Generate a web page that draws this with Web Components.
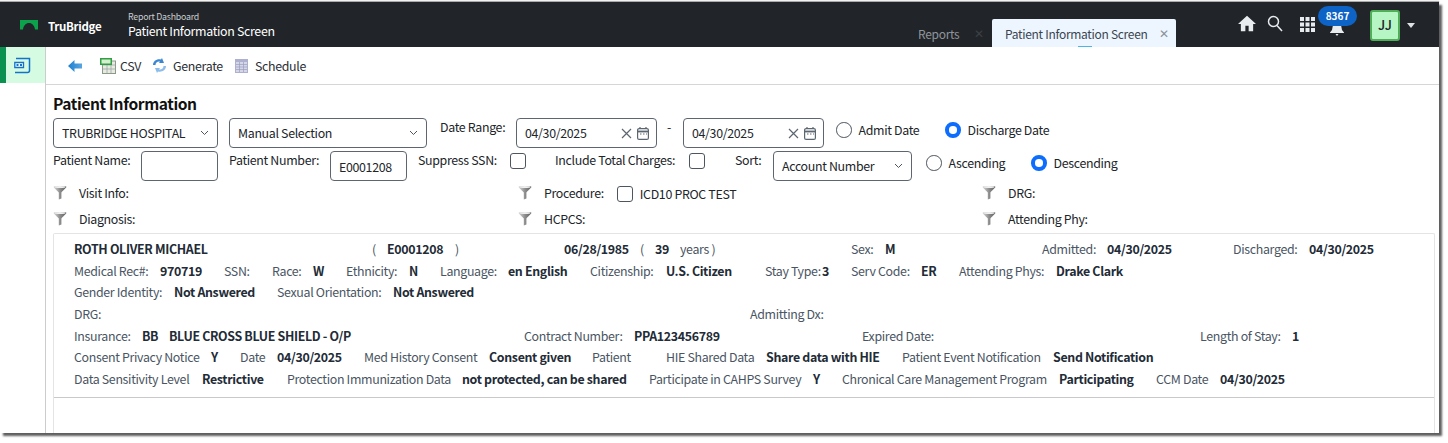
<!DOCTYPE html>
<html lang="en">
<head>
<meta charset="utf-8">
<title>Patient Information Screen</title>
<style>
  html, body { margin: 0; background: #fff; overflow: hidden; height: 443px; }
  body { font-family: "Noto Sans CJK JP", "Noto Sans", sans-serif; font-size: 12.4px; letter-spacing: -.33px; color: #212529; }
</style>
</head>
<body>
<app-window>
  <app-header slot="header"></app-header>
  <side-nav slot="side"></side-nav>
  <tool-bar slot="tools"></tool-bar>
  <patient-form slot="form"></patient-form>
  <patient-card slot="card"></patient-card>
</app-window>

<script>
const funnelSvg = `<svg width="14" height="15" viewBox="0 0 14 15"><defs><linearGradient id="fg" x1="0" x2="1"><stop offset="0" stop-color="#d8d8d8"/><stop offset=".5" stop-color="#8e8e8e"/><stop offset="1" stop-color="#5e5e5e"/></linearGradient></defs><path d="M.5 1.800C.5.600 13.500.600 13.500 1.800 13.500 2.600 9 6.500 8.400 7.600V13.600L5.800 14.600V7.600C5 6.500.5 2.600.5 1.800Z" fill="url(#fg)"/><ellipse cx="7" cy="1.900" rx="5.400" ry="1" fill="#efefef"/></svg>`;

function define(name, css, render) {
  customElements.define(name, class extends HTMLElement {
    connectedCallback() {
      const root = this.attachShadow({ mode: "open" });
      root.innerHTML = `<style>${css}</style>${render(this)}`;
    }
  });
}

define("app-window", `
  :host { display: block; width: 1439px; height: 431px; margin-top: 2px; background: #fff;
    box-shadow: 3px 3px 2px #5f5f5f, 0 -1px 1px #aaa; overflow: hidden; }
  .shell { display: grid; grid-template-columns: 46px 1fr; grid-template-rows: 45px 1fr; height: 100%; }
  .head { grid-column: 1 / -1; }
  .main { display: flex; flex-direction: column; min-width: 0; min-height: 0; }
`, () => `
  <div class="shell">
    <div class="head"><slot name="header"></slot></div>
    <slot name="side"></slot>
    <div class="main">
      <slot name="tools"></slot>
      <slot name="form"></slot>
      <slot name="card"></slot>
    </div>
  </div>`);

define("app-header", `
  :host { display: flex; align-items: stretch; height: 45px; background: #212529; color: #fff; position: relative; }
  .logo { margin: 18px 0 0 20px; width: 18px; height: 10px; }
  .brand { margin: 15px 0 0 10px; width: 80px; font-weight: 700; font-size: 11.5px; line-height: 18px; letter-spacing: -.3px; }
  .titles { width: 200px; padding-top: 9px; }
  .titles small { display: block; font-size: 8.800px; letter-spacing: -.23px; line-height: 12px; color: #c9ccd0; }
  .titles b { display: block; font-weight: 400; font-size: 12.4px; line-height: 17px; }
  .tabs { display: flex; margin-left: 590px; align-self: flex-end; height: 28px; white-space: nowrap; }
  .tab { display: flex; align-items: center; font-size: 12px; letter-spacing: -.3px; }
  .tab.off { width: 74px; color: #8f959b; }
  .tab.off i { margin-left: 15px; color: #3b4046; }
  .tab.on { width: 184px; box-sizing: border-box; padding-left: 13px; background: #edf6fe; color: #3a4450;
    border-radius: 2px 2px 0 0; position: relative; height: 28px; }
  .tab.on i { margin-left: 11px; color: #8b929a; }
  .tab.on::after { content: ""; position: absolute; left: 86px; bottom: 0; width: 14px; height: 1px; background: #4db5e6; }
  .tab i { font-style: normal; font-size: 12px; line-height: 1; }
  .tools { display: flex; align-items: flex-start; margin-left: 62px; position: relative; }
  .tools svg { display: block; fill: #e9ecef; }
  .ic { margin-top: 14px; }
  .bell { position: relative; margin: 0 0 0 15px; width: 14px; height: 45px; }
  .bell svg { position: absolute; top: 23px; left: 0; }
  .badge { position: absolute; top: 4px; left: -12px; width: 39px; height: 20px; border-radius: 10px; background: #0e63c6;
    color: #fff; font: 700 10px/19px "Noto Sans CJK JP", sans-serif; text-align: center; letter-spacing: 0; }
  .avatar { box-sizing: border-box; margin: 8px 0 0 26px; width: 30px; height: 31px; border: 2px solid #4fae57; border-radius: 3px;
    background: #b6f5c4; color: #212529; font-weight: 500; font-size: 13px; line-height: 25px; text-align: center; letter-spacing: .2px; }
  .caret { margin: 21px 0 0 7px; width: 0; height: 0; border: 4.500px solid transparent; border-top: 5px solid #dfe2e5; border-bottom: 0; }
`, () => `
  <svg class="logo" viewBox="0 0 18 10"><path d="M0 0H18V9.500H15C14.500 5.500 12 3 9 3S3.500 5.500 3 9.500H0Z" fill="#0ca24c"/></svg>
  <div class="brand">TruBridge</div>
  <div class="titles"><small>Report Dashboard</small><b>Patient Information Screen</b></div>
  <div class="tabs">
    <div class="tab off">Reports<i>&#x2715;</i></div>
    <div class="tab on">Patient Information Screen<i>&#x2715;</i></div>
  </div>
  <div class="tools">
    <svg class="ic" style="margin-top:13px" width="18" height="18" viewBox="1 2 22 20"><path d="M10 21v-7h4v7h5.500v-9H23L12 2 1 12h3.500v9z"/></svg>
    <svg class="ic" style="margin:13px 0 0 11px;fill:none;stroke:#e9ecef;stroke-width:1.500" width="16" height="17" viewBox="0 0 16 17"><circle cx="6.500" cy="6.500" r="5"/><path d="M10 10.500l5 5.500"/></svg>
    <svg class="ic" style="margin:15px 0 0 17px" width="15" height="15" viewBox="0 0 15 15"><path d="M0 0h4v4H0zM5.500 0h4v4h-4zM11 0h4v4h-4zM0 5.500h4v4H0zM5.500 5.500h4v4h-4zM11 5.500h4v4h-4zM0 11h4v4H0zM5.500 11h4v4h-4zM11 11h4v4h-4z"/></svg>
    <div class="bell">
      <svg width="14" height="11" viewBox="0 0 14 11"><path d="M3 0h8l1 5 2 2.500V8H0v-.5L2 5zM5.500 9h3L7 11z"/></svg>
      <span class="badge">8367</span>
    </div>
    <div class="avatar">JJ</div>
    <div class="caret"></div>
  </div>`);

define("side-nav", `
  :host { display: block; box-sizing: border-box; border-right: 1px solid #ccc; background: #fff; }
  .item { display: flex; align-items: center; height: 36px; background: #d5fbe2; border-left: 6px solid #0a9150; padding-left: 8px; }
`, () => `
  <div class="item">
    <svg width="17" height="17" viewBox="0 0 17 17" fill="none" stroke="#1173c9" stroke-width="1.500">
      <path d="M2 1.500H15.500V13.500Q15.500 15.500 13.500 15.500H1"/>
      <path d="M.8 5.500H9.500V10.500H.8Z" fill="#fff" stroke-width="1.300"/>
      <path d="M2.500 7h2v2h-2zM6 7h2v2H6z" stroke="none" fill="#1173c9"/>
    </svg>
  </div>`);

define("tool-bar", `
  :host { display: flex; align-items: center; height: 38px; box-sizing: border-box; border-bottom: 1px solid #d6d6d6;
    color: #2b3035; flex: none; }
  svg { display: block; flex: none; }
`, () => `
  <svg style="margin-left:22px" width="14" height="12" viewBox="0 0 14 12"><defs><linearGradient id="ab" x1="0" x2="1"><stop offset="0" stop-color="#1c7fd0"/><stop offset="1" stop-color="#58a6e0"/></linearGradient></defs><path d="M0 6 6.500 0V3.500H14V8.500H6.500V12Z" fill="url(#ab)"/></svg>
  <svg style="margin-left:18px" width="16" height="17" viewBox="0 0 16 17"><rect x="2.500" y="4" width="13" height="12.500" fill="#e9e9df" stroke="#8c9a8c"/><path d="M2.500 8h13M2.500 12h13M7 8v8M11 8v8" stroke="#9aa" stroke-width=".8"/><rect x="0" y="1" width="12" height="7" fill="#2ea043"/><rect x="1.500" y="2.500" width="9" height="4" fill="#d6efcf"/></svg>
  <span style="margin-left:4px">CSV</span>
  <svg style="margin-left:11px" width="15" height="15" viewBox="0 0 15 15"><path d="M1 7C1 3 5 .5 9 1.500L10 0 12 5 7 5 8 3.500C5.500 3 3.500 4.500 3.500 7Z" fill="#3b86d2"/><path d="M14 8C14 12 10 14.500 6 13.500L5 15 3 10H8L7 11.500C9.500 12 11.500 10.500 11.500 8Z" fill="#8dbcea"/></svg>
  <span style="margin-left:6px">Generate</span>
  <svg style="margin-left:12px" width="13" height="14" viewBox="0 0 13 14"><rect width="13" height="14" fill="#aeb0cf"/><path d="M1 3h11v10H1z" fill="#d5d6e6"/><path d="M1 5.500h11M1 8h11M1 10.500h11M4.500 3v10M8.500 3v10" stroke="#9c9ec2" stroke-width=".7"/></svg>
  <span style="margin-left:7px">Schedule</span>`);

const chevron = `<svg width="9" height="6" viewBox="0 0 9 6" fill="none" stroke="#4e5760" stroke-width="1"><path d="M1 1l3.500 3.500L8 1"/></svg>`;
const boxCss = `box-sizing: border-box; height: 30px; border: 1px solid #5d6670; border-radius: 4px; background: #fff;`;

define("form-select", `
  :host { display: flex; align-items: center; justify-content: space-between; ${boxCss} padding: 0 8px 0 8px; flex: none; }
`, (el) => `<span>${el.getAttribute("text")}</span>${chevron}`);

define("text-box", `
  :host { display: flex; align-items: center; ${boxCss} padding: 0 8px; flex: none; padding-top: 1px; }
`, (el) => `<span>${el.getAttribute("text") || ""}</span>`);

define("date-box", `
  :host { display: flex; align-items: center; ${boxCss} width: 141px; padding: 0 7px 0 8px; flex: none; }
  span { flex: 1; }
  svg { display: block; }
`, (el) => `<span>${el.getAttribute("text")}</span>
  <svg width="11" height="11" viewBox="0 0 11 11" stroke="#5c6670" stroke-width="1.200" fill="none"><path d="M1 1l9 9M10 1l-9 9"/></svg>
  <svg style="margin-left:5px" width="12" height="13" viewBox="0 0 12 13" fill="none" stroke="#5c6670" stroke-width="1.200"><rect x=".6" y="1.600" width="10.800" height="10.800" rx="1.500"/><path d="M.6 4.500h10.800" stroke-width="1.800"/><path d="M3 0v2M9 0v2M3 7h1.500M6 7h1.500M9 7h1"/></svg>`);

define("radio-opt", `
  :host { display: flex; align-items: center; gap: 7px; height: 22px; flex: none; }
  i { box-sizing: border-box; width: 15.500px; height: 15.500px; border-radius: 50%; border: 1px solid #4d565f; background: #fff; flex: none; }
  :host([on]) i { border: 4.800px solid #0d6efd; }
`, (el) => `<i></i><span>${el.getAttribute("text")}</span>`);

define("check-box", `
  :host { display: block; box-sizing: border-box; width: 16px; height: 16px; border: 1px solid #4d565f; border-radius: 3px; background: #fff; flex: none; }
`, () => ``);

define("filter-item", `
  :host { display: flex; align-items: center; height: 26px; }
  svg { display: block; flex: none; margin: -3px 12px 0 0; }
  .extra { display: flex; align-items: center; gap: 7px; }
  b { font-weight: 400; margin-top: -2px; }
`, (el) => `${funnelSvg}<b>${el.getAttribute("text")}</b><span class="extra"><slot></slot></span>`);

define("patient-form", `
  :host { display: block; padding: 6px 0 0 7px; flex: none; }
  h2 { margin: 0 0 3px; font-weight: 700; font-size: 15.600px; letter-spacing: -.41px; line-height: 24px; color: #111; height: 24px; }
  .row { display: flex; height: 30px; margin-bottom: 3px; line-height: 18px; }
  .row > span { flex: none; }
  .row radio-opt { margin-top: 1px; }
  .filters { display: grid; grid-template-columns: 465px 464px 1fr; }
`, () => `
  <h2>Patient Information</h2>
  <div class="row">
    <form-select text="TRUBRIDGE HOSPITAL" style="width:165px"></form-select>
    <form-select text="Manual Selection" style="width:198px;margin-left:11px"></form-select>
    <span style="margin-left:13px;width:76px">Date Range:</span>
    <date-box text="04/30/2025"></date-box>
    <span style="margin-left:10px;width:16px">-</span>
    <date-box text="04/30/2025"></date-box>
    <radio-opt text="Admit Date" style="margin-left:12px;width:109px"></radio-opt>
    <radio-opt text="Discharge Date" on></radio-opt>
  </div>
  <div class="row" style="margin-bottom:0">
    <span style="width:88px">Patient Name:</span>
    <text-box style="width:77px"></text-box>
    <span style="margin-left:11px;width:101px">Patient Number:</span>
    <text-box text="E0001208" style="width:77px"></text-box>
    <span style="margin-left:11px;width:92px">Suppress SSN:</span>
    <check-box style="margin-top:2px"></check-box>
    <span style="margin-left:29px;width:134px">Include Total Charges:</span>
    <check-box style="margin-top:2px"></check-box>
    <span style="margin-left:30px;width:38px">Sort:</span>
    <form-select text="Account Number" style="width:139px"></form-select>
    <radio-opt text="Ascending" style="margin-left:14px;width:105px"></radio-opt>
    <radio-opt text="Descending" on></radio-opt>
  </div>
  <div class="filters">
    <filter-item text="Visit Info:"></filter-item>
    <filter-item text="Procedure:"><check-box style="margin-left:13px"></check-box><span>ICD10 PROC TEST</span></filter-item>
    <filter-item text="DRG:"></filter-item>
    <filter-item text="Diagnosis:"></filter-item>
    <filter-item text="HCPCS:"></filter-item>
    <filter-item text="Attending Phy:"></filter-item>
  </div>`);

// each row: [left edge in the picture, text, bold?]
const cardRows = [
  [[74, "ROTH OLIVER MICHAEL", 1], [372, "("], [387, "E0001208", 1], [455, ")"], [564, "06/28/1985", 1], [640, "("], [655, "39", 1], [680, "years )"], [851, "Sex:"], [885, "M", 1], [1042, "Admitted:"], [1107, "04/30/2025", 1], [1233, "Discharged:"], [1309, "04/30/2025", 1]],
  [[74, "Medical Rec#:"], [160, "970719", 1], [224, "SSN:"], [272, "Race:"], [313, "W", 1], [346, "Ethnicity:"], [409, "N", 1], [440, "Language:"], [508, "en English", 1], [590, "Citizenship:"], [666, "U.S. Citizen", 1], [765, "Stay Type:"], [822, "3", 1], [851, "Serv Code:"], [921, "ER", 1], [959, "Attending Phys:"], [1056, "Drake Clark", 1]],
  [[74, "Gender Identity:"], [174, "Not Answered", 1], [277, "Sexual Orientation:"], [393, "Not Answered", 1]],
  [[74, "DRG:"], [750, "Admitting Dx:"]],
  [[74, "Insurance:"], [142, "BB", 1], [169, "BLUE CROSS BLUE SHIELD - O/P", 1], [524, "Contract Number:"], [634, "PPA123456789", 1], [862, "Expired Date:"], [1200, "Length of Stay:"], [1292, "1", 1]],
  [[74, "Consent Privacy Notice"], [211, "Y", 1], [240, "Date"], [277, "04/30/2025", 1], [364, "Med History Consent"], [489, "Consent given", 1], [592, "Patient"], [666, "HIE Shared Data"], [766, "Share data with HIE", 1], [902, "Patient Event Notification"], [1053, "Send Notification", 1]],
  [[74, "Data Sensitivity Level"], [202, "Restrictive", 1], [287, "Protection Immunization Data"], [462, "not protected, can be shared", 1], [649, "Participate in CAHPS Survey"], [813, "Y", 1], [842, "Chronical Care Management Program"], [1059, "Participating", 1], [1156, "CCM Date"], [1220, "04/30/2025", 1]],
];

define("patient-card", `
  :host { display: block; flex: 1; box-sizing: border-box; margin: 0 4px 0 7px; border: 1px solid #e4e4e4; border-bottom: 0; border-radius: 2px 2px 0 0;
    padding-top: 5px; color: #4a5563; }
  .line { display: flex; height: 21.700px; line-height: 21.700px; padding-left: 20px; white-space: nowrap; }
  .line span { flex: none; }
  .line b { font-weight: 700; color: #222b36; }
  .rows { padding-bottom: 6px; border-bottom: 1px solid #c9c9c9; }
`, () => `<div class="rows">${cardRows.map((row) => `<div class="line">${row.map(([x, text, bold], i) => {
    const next = row[i + 1];
    const w = next ? `width:${next[0] - x}px` : "";
    return `<span style="${w}">${bold ? `<b>${text}</b>` : text}</span>`;
  }).join("")}</div>`).join("")}</div>`);
</script>
</body>
</html>
